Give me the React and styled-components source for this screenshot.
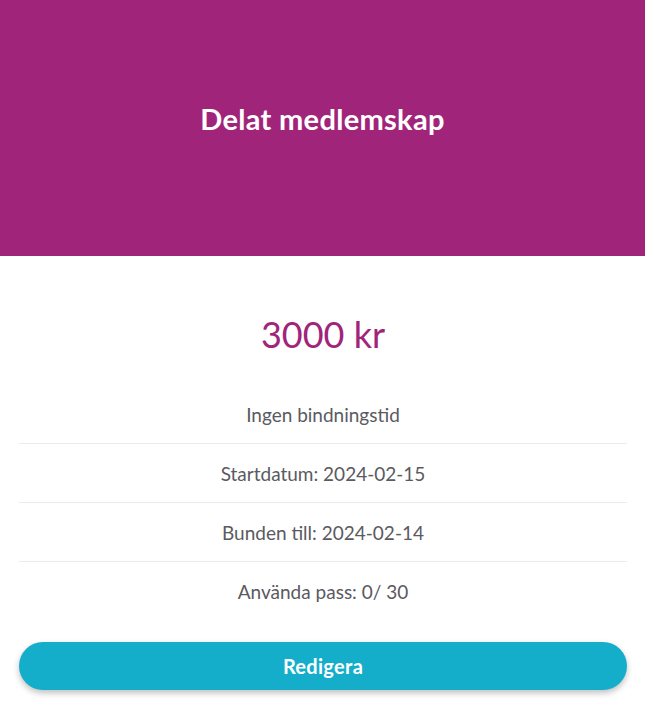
import styled, { createGlobalStyle } from "styled-components";

const GlobalStyle = createGlobalStyle`
    body {
        margin: 0;
        background: #ffffff;
        font-family: "Lato", "Noto Sans", sans-serif;
    }
`;

const Page = styled.main`
    width: 100%;
    display: flex;
    flex-direction: column;
`;

const Banner = styled.header`
    height: 256px;
    background-color: #a0257a;
    display: flex;
    align-items: center;
    justify-content: center;
    padding-bottom: 20px;
    box-sizing: border-box;

    h1 {
        margin: 0;
        color: #ffffff;
        font: 700 29px "Lato", sans-serif;
        letter-spacing: 0.3px;
    }
`;

const Body = styled.section`
    padding: 0 18px 14px 19px;
    display: flex;
    flex-direction: column;
`;

const Price = styled.p`
    margin: 56px 0 33px;
    height: 40px;
    line-height: 40px;
    text-align: center;
    color: #a0257a;
    font: 400 36px "Lato", sans-serif;
`;

const Details = styled.ul`
    list-style: none;
    margin: 0;
    padding: 0;
`;

const Row = styled.li`
    height: 58px;
    display: flex;
    align-items: center;
    justify-content: center;
    color: #5a5a5f;
    font: 400 19px "Lato", sans-serif;
    border-bottom: ${({ $last }) => ($last ? "none" : "1px solid #ebebeb")};
`;

const EditButton = styled.button`
    margin-top: 22px;
    height: 48px;
    width: 100%;
    border: none;
    border-radius: 24px;
    background-color: #14aecb;
    color: #ffffff;
    font: 700 20px "Lato", sans-serif;
    letter-spacing: 0.3px;
    box-shadow: 0 3px 6px rgba(0, 0, 0, 0.25);
    cursor: pointer;
`;

const rows = [
    "Ingen bindningstid",
    "Startdatum: 2024-02-15",
    "Bunden till: 2024-02-14",
    "Använda pass: 0/ 30",
];

export default function App() {
    return (
        <>
            <GlobalStyle />
            <Page>
                <Banner>
                    <h1>Delat medlemskap</h1>
                </Banner>
                <Body>
                    <Price>3000 kr</Price>
                    <Details>
                        {rows.map((text, i) => (
                            <Row key={text} $last={i === rows.length - 1}>
                                {text}
                            </Row>
                        ))}
                    </Details>
                    <EditButton>Redigera</EditButton>
                </Body>
            </Page>
        </>
    );
}
